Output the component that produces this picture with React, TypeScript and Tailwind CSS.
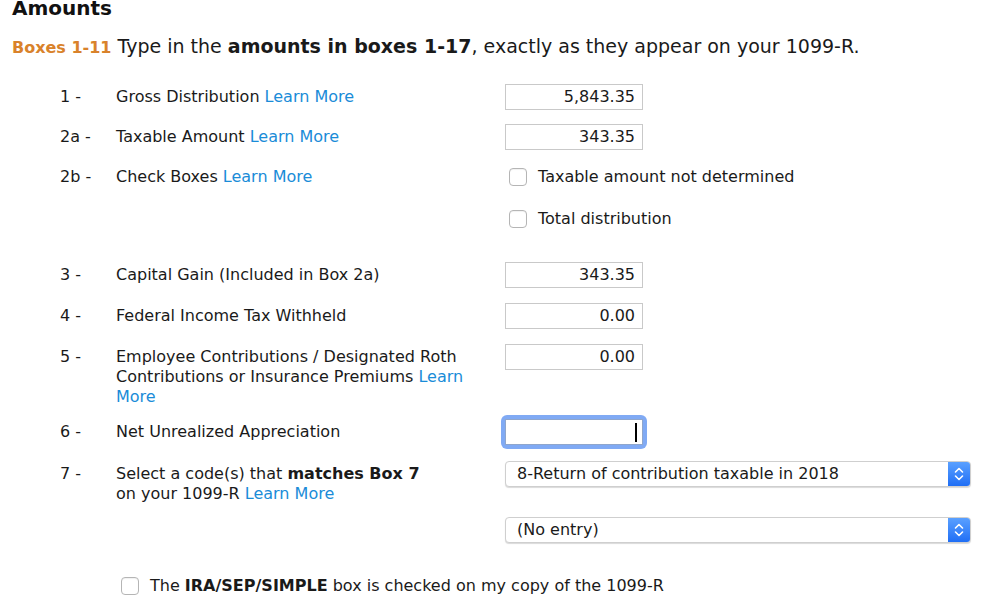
import React from 'react'

const FONT = { fontFamily: '"DejaVu Sans", "Liberation Sans", sans-serif' }

function LearnMore() {
  return <span className="text-[#1a8cd8] cursor-pointer">Learn More</span>
}

function AmountInput({ value }: { value: string }) {
  return (
    <div className="w-[138px] h-[26px] border border-[#c9c9c9] bg-white flex items-center justify-end pr-[7px] text-[16px] text-[#1a1a1a]">
      {value}
    </div>
  )
}

function Check({ label }: { label: React.ReactNode }) {
  return (
    <div className="h-[26px] flex items-center gap-[11px]">
      <span className="w-[18px] h-[18px] rounded-[4px] border border-[#b5b5b5] bg-white shadow-[inset_0_1px_1px_rgba(0,0,0,0.06)]" />
      <span>{label}</span>
    </div>
  )
}

function SelectBox({ value }: { value: string }) {
  return (
    <div className="w-[466px] h-[26px] rounded-[4px] border border-[#cfcfcf] shadow-[0_1px_1px_rgba(0,0,0,0.15)] bg-white flex items-center overflow-hidden">
      <span className="flex-1 pl-[11px] text-[16px] text-[#1a1a1a]">{value}</span>
      <span className="w-[22px] h-full bg-gradient-to-b from-[#5aa0ff] to-[#1f6ef5] flex items-center justify-center">
        <svg width="12" height="16" viewBox="0 0 12 16" fill="none" stroke="white" strokeWidth="1.6" strokeLinecap="round" strokeLinejoin="round">
          <path d="M2.5 6 L6 2.5 L9.5 6" />
          <path d="M2.5 10 L6 13.5 L9.5 10" />
        </svg>
      </span>
    </div>
  )
}

function Row({ num, label, right, className = '' }: { num: string; label?: React.ReactNode; right?: React.ReactNode; className?: string }) {
  return (
    <div className={`flex items-start ${className}`}>
      <div className="w-[56px] pt-[3px] leading-[20px]">{num}</div>
      <div className="w-[389px] pt-[3px] leading-[20px] pr-[20px]">{label}</div>
      <div>{right}</div>
    </div>
  )
}

export default function App() {
  return (
    <div className="w-[999px] h-[606px] overflow-hidden bg-white text-[#1a1a1a] text-[16px]" style={FONT}>
      <div className="pl-[12px]">
        <h1 className="-mt-[4px] text-[20px] leading-[24px] font-bold text-[#111]">Amounts</h1>
        <p className="mt-[14px] text-[19px] leading-[24px]">
          <span className="text-[16px] font-bold text-[#d9822b]">Boxes 1-11</span> Type in the{' '}
          <span className="font-bold">amounts in boxes 1-17</span>, exactly as they appear on your 1099-R.
        </p>

        <div className="ml-[48px]">
          <Row className="mt-[24px]" num="1 -" label={<>Gross Distribution <LearnMore /></>} right={<AmountInput value="5,843.35" />} />
          <Row className="mt-[14px]" num="2a -" label={<>Taxable Amount <LearnMore /></>} right={<AmountInput value="343.35" />} />
          <Row className="mt-[14px]" num="2b -" label={<>Check Boxes <LearnMore /></>} right={<div className="pl-[4px]"><Check label="Taxable amount not determined" /></div>} />
          <Row className="mt-[16px]" num="" right={<div className="pl-[4px]"><Check label="Total distribution" /></div>} />
          <Row className="mt-[30px]" num="3 -" label="Capital Gain (Included in Box 2a)" right={<AmountInput value="343.35" />} />
          <Row className="mt-[15px]" num="4 -" label="Federal Income Tax Withheld" right={<AmountInput value="0.00" />} />
          <Row
            className="mt-[15px]"
            num="5 -"
            label={<>Employee Contributions / Designated Roth Contributions or Insurance Premiums <LearnMore /></>}
            right={<AmountInput value="0.00" />}
          />
          <Row
            className="mt-[12px]"
            num="6 -"
            label="Net Unrealized Appreciation"
            right={
              <div className="-ml-[4px] -mt-[4px] p-[4px] rounded-[6px] bg-[#80aaf4]">
                <div className="w-[138px] h-[26px] border border-[#8fa6cc] bg-white flex items-center justify-end pr-[5px]">
                  <span className="w-[2px] h-[19px] bg-black" />
                </div>
              </div>
            }
          />
          <Row
            className="mt-[12px]"
            num="7 -"
            label={<>Select a code(s) that <span className="font-bold">matches Box 7</span><br />on your 1099-R <LearnMore /></>}
            right={<SelectBox value="8-Return of contribution taxable in 2018" />}
          />
          <div className="mt-[13px] ml-[445px]">
            <SelectBox value="(No entry)" />
          </div>
          <div className="mt-[30px] ml-[61px]">
            <Check label={<>The <span className="font-bold">IRA/SEP/SIMPLE</span> box is checked on my copy of the 1099-R</>} />
          </div>
        </div>
      </div>
    </div>
  )
}
